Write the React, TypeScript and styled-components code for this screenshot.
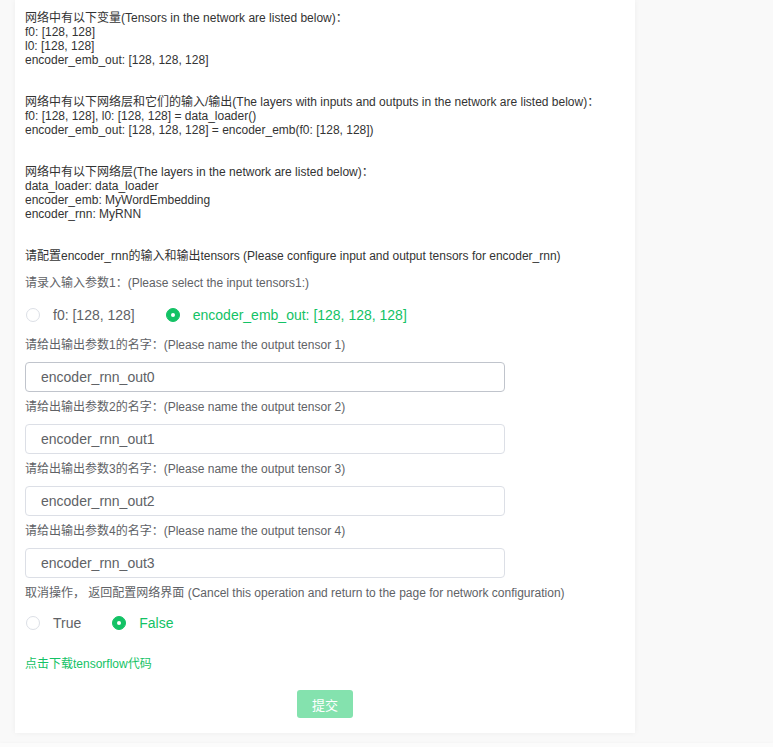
import React from "react";
import styled, { createGlobalStyle } from "styled-components";

const GlobalStyle = createGlobalStyle`
  html, body {
    margin: 0;
    padding: 0;
    background: #f9f9f9;
  }
  body {
    font-family: "Liberation Sans", Arial, "Noto Sans CJK SC", sans-serif;
  }
`;

const Page = styled.div`
  display: flex;
  flex-direction: column;
  padding-left: 15px;
  min-height: 747px;
  box-sizing: border-box;
`;

const Card = styled.div`
  width: 620px;
  box-sizing: border-box;
  background: #fff;
  padding: 11px 10px 15px;
  box-shadow: 0 0 6px rgba(0, 0, 0, 0.05);
  display: flex;
  flex-direction: column;
`;

const Footer = styled.div`
  margin-top: 10px;
  margin-left: -15px;
  height: 20px;
  background: #fbfbfb;
  box-shadow: 0 0 4px rgba(0, 0, 0, 0.03);
`;

const Info = styled.div`
  font-size: 12px;
  line-height: 14px;
  color: #333;
  white-space: pre;
`;

const Blank = styled.div`
  height: 28px;
`;

const Label = styled.div<{ $mt?: number; $mb?: number }>`
  font-size: 12px;
  line-height: 20px;
  color: #606266;
  margin-top: ${(p) => p.$mt ?? 5}px;
  margin-bottom: ${(p) => p.$mb ?? 7}px;
`;

const Heading = styled.div`
  font-size: 12px;
  line-height: 14px;
  color: #333;
`;

const RadioRow = styled.div<{ $mt: number }>`
  display: flex;
  align-items: center;
  height: 20px;
  margin-top: ${(p) => p.$mt}px;
`;

const RadioItem = styled.label<{ $checked?: boolean }>`
  display: flex;
  align-items: center;
  margin-right: 30px;
  font-size: 14px;
  color: ${(p) => (p.$checked ? "#13c265" : "#606266")};
  cursor: pointer;
`;

const RadioDot = styled.span<{ $checked?: boolean }>`
  width: 14px;
  height: 14px;
  box-sizing: border-box;
  border-radius: 50%;
  margin-left: 1px;
  margin-right: 13px;
  border: 1px solid ${(p) => (p.$checked ? "#13c265" : "#dcdfe6")};
  background: ${(p) => (p.$checked ? "#13c265" : "#fff")};
  display: flex;
  align-items: center;
  justify-content: center;
  &::after {
    content: "";
    width: 4px;
    height: 4px;
    border-radius: 50%;
    background: #fff;
    display: ${(p) => (p.$checked ? "block" : "none")};
  }
`;

const Input = styled.input<{ $hover?: boolean }>`
  width: 480px;
  height: 30px;
  box-sizing: border-box;
  border: 1px solid ${(p) => (p.$hover ? "#c0c4cc" : "#dcdfe6")};
  border-radius: 4px;
  padding: 0 15px;
  font-family: "Liberation Sans", Arial, "Noto Sans CJK SC", sans-serif;
  font-size: 14px;
  color: #606266;
  outline: none;
  background: #fff;
`;

const DownloadLink = styled.a`
  display: block;
  margin-top: 21px;
  font-size: 12px;
  line-height: 20px;
  color: #13c265;
  text-decoration: none;
  cursor: pointer;
`;

const ButtonRow = styled.div`
  display: flex;
  justify-content: center;
  margin-top: 16px;
`;

const SubmitButton = styled.button`
  width: 56px;
  height: 28px;
  border: none;
  border-radius: 3px;
  background: #84e2ae;
  color: #fff;
  font-family: "Liberation Sans", Arial, "Noto Sans CJK SC", sans-serif;
  font-size: 13px;
  padding: 0;
  cursor: not-allowed;
`;

const Radio: React.FC<{ checked?: boolean; label: string }> = ({ checked, label }) => (
  <RadioItem $checked={checked}>
    <RadioDot $checked={checked} />
    {label}
  </RadioItem>
);

const outputs = [0, 1, 2, 3];

export default function App() {
  return (
    <>
      <GlobalStyle />
      <Page>
        <Card>
          <Info>{`网络中有以下变量(Tensors in the network are listed below)：
f0: [128, 128]
l0: [128, 128]
encoder_emb_out: [128, 128, 128]`}</Info>
          <Blank />
          <Info>{`网络中有以下网络层和它们的输入/输出(The layers with inputs and outputs in the network are listed below)：
f0: [128, 128], l0: [128, 128] = data_loader()
encoder_emb_out: [128, 128, 128] = encoder_emb(f0: [128, 128])`}</Info>
          <Blank />
          <Info>{`网络中有以下网络层(The layers in the network are listed below)：
data_loader: data_loader
encoder_emb: MyWordEmbedding
encoder_rnn: MyRNN`}</Info>
          <Blank />
          <Heading>请配置encoder_rnn的输入和输出tensors (Please configure input and output tensors for encoder_rnn)</Heading>
          <Label $mt={10} $mb={0}>请录入输入参数1：(Please select the input tensors1:)</Label>
          <RadioRow $mt={12}>
            <Radio label="f0: [128, 128]" />
            <Radio checked label="encoder_emb_out: [128, 128, 128]" />
          </RadioRow>
          {outputs.map((i) => (
            <React.Fragment key={i}>
              <Label $mt={i === 0 ? 10 : 5}>
                请给出输出参数{i + 1}的名字：(Please name the output tensor {i + 1})
              </Label>
              <Input $hover={i === 0} defaultValue={`encoder_rnn_out${i}`} />
            </React.Fragment>
          ))}
          <Label $mt={5} $mb={0}>
            取消操作， 返回配置网络界面 (Cancel this operation and return to the page for network configuration)
          </Label>
          <RadioRow $mt={10}>
            <Radio label="True" />
            <Radio checked label="False" />
          </RadioRow>
          <DownloadLink>点击下载tensorflow代码</DownloadLink>
          <ButtonRow>
            <SubmitButton>提交</SubmitButton>
          </ButtonRow>
        </Card>
        <Footer />
      </Page>
    </>
  );
}
